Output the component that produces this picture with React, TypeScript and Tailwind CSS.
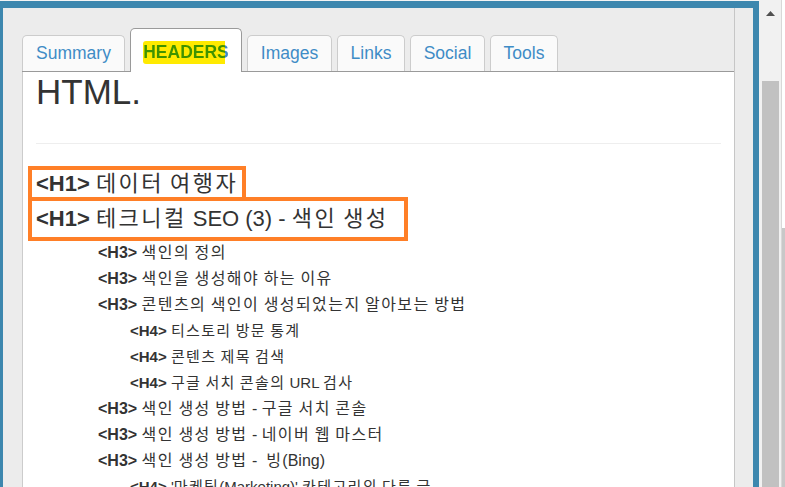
import React from 'react';

const FONT = "font-['Liberation_Sans','Noto_Sans_CJK_KR',sans-serif]";

type Row = { tag: 'H3' | 'H4'; text: string };

const rows: Row[] = [
  { tag: 'H3', text: '색인의 정의' },
  { tag: 'H3', text: '색인을 생성해야 하는 이유' },
  { tag: 'H3', text: '콘텐츠의 색인이 생성되었는지 알아보는 방법' },
  { tag: 'H4', text: '티스토리 방문 통계' },
  { tag: 'H4', text: '콘텐츠 제목 검색' },
  { tag: 'H4', text: '구글 서치 콘솔의 URL 검사' },
  { tag: 'H3', text: '색인 생성 방법 - 구글 서치 콘솔' },
  { tag: 'H3', text: '색인 생성 방법 - 네이버 웹 마스터' },
  { tag: 'H3', text: '색인 생성 방법 -  빙(Bing)' },
  { tag: 'H4', text: "'마케팅(Marketing)' 카테고리의 다른 글" },
];

const tabs = [
  { label: 'Summary', w: 'w-[103px]' },
  { label: 'HEADERS', w: 'w-[112px]', active: true },
  { label: 'Images', w: 'w-[85px]' },
  { label: 'Links', w: 'w-[68px]' },
  { label: 'Social', w: 'w-[75px]' },
  { label: 'Tools', w: 'w-[68px]' },
];

// Hangul runs are set a little wider, like the original's Windows font
const Ko: React.FC<{ text: string; tracking: string }> = ({ text, tracking }) => (
  <>
    {text.split(/([가-힣]+)/).map((part, i) =>
      /[가-힣]/.test(part) ? (
        <span key={i} className={tracking}>
          {part}
        </span>
      ) : (
        <React.Fragment key={i}>{part}</React.Fragment>
      )
    )}
  </>
);

const Tab: React.FC<{ label: string; w: string; active?: boolean }> = ({ label, w, active }) => {
  if (active) {
    return (
      <div className={`${w} h-[44px] -mb-px pt-[3px] flex items-center justify-center bg-white border border-b-0 border-[#9a9a9a] rounded-t-[5px]`}>
        <span className="bg-[linear-gradient(to_right,#ffea00_calc(100%-4px),transparent_calc(100%-4px))] rounded-[3px] leading-[22px]">
          <span className="text-[17.5px] font-bold bg-[linear-gradient(to_right,#3f9300_calc(100%-4px),#3d8ac4_calc(100%-4px))] bg-clip-text text-transparent">
            {label}
          </span>
        </span>
      </div>
    );
  }
  return (
    <div className={`${w} h-[36px] flex items-center justify-center bg-[#fafafa] border border-b-0 border-[#cccccc] rounded-t-[5px] text-[17.5px] text-[#3f8cc6]`}>
      {label}
    </div>
  );
};

export default function App() {
  return (
    <div className={`w-[785px] h-[487px] overflow-hidden flex bg-white ${FONT}`}>
      <div className="w-[759px] h-full pt-px bg-[#f4f4f4] flex flex-col">
        <div className="flex-1 flex bg-[#ececec] border-t-[7px] border-l-[3px] border-r-[6px] border-[#3d87ae] min-h-0">
          <div className="ml-[19px] w-[713px] flex flex-col border-r border-[#c6c6c6] min-h-0">
            {/* tab bar */}
            <div className="h-[64px] shrink-0 flex items-end gap-[5px] border-b border-[#9a9a9a]">
              {tabs.map((t) => (
                <Tab key={t.label} {...t} />
              ))}
            </div>

            {/* panel */}
            <div className="flex-1 bg-white border-l border-[#cccccc] pl-[13px] pr-[13px] overflow-hidden text-[#333]">
              <div className="text-[35px] leading-[40px]">HTML.</div>
              <div className="mt-[31px] h-px bg-[#eeeeee]" />

              <div className="mt-[22px] -ml-[8px] flex flex-col items-start">
                <div className="h-[35px] border-4 border-[#ff7f27] px-1 text-[22px] leading-[27px] whitespace-nowrap">
                  <span className="font-bold">&lt;H1&gt;</span> <Ko text="데이터 여행자" tracking="tracking-[0.11em]" />
                </div>
                <div className="-mt-1 h-[44px] border-4 border-[#ff7f27] pl-1 pr-[15px] text-[22px] leading-[36px] whitespace-nowrap">
                  <span className="font-bold">&lt;H1&gt;</span> <Ko text="테크니컬 SEO (3) - 색인 생성" tracking="tracking-[0.11em]" />
                </div>
              </div>

              <ul className="-mt-px">
                {rows.map((r, i) => (
                  <li
                    key={i}
                    className={
                      r.tag === 'H3'
                        ? 'ml-[62px] text-[16px] leading-[26px] whitespace-pre'
                        : 'ml-[94px] text-[15px] leading-[26px] whitespace-pre'
                    }
                  >
                    <span className="font-bold">&lt;{r.tag}&gt;</span> <Ko text={r.text} tracking="tracking-[0.09em]" />
                  </li>
                ))}
              </ul>
            </div>
          </div>
        </div>
      </div>

      {/* browser scrollbar */}
      <div className="w-[22px] h-full bg-[#f1f1f1] flex flex-col items-center">
        <div className="h-[81px] w-full flex justify-center pt-[11px]">
          <svg width="9" height="5" viewBox="0 0 9 5">
            <path d="M0 5 L4.5 0 L9 5 Z" fill="#505050" />
          </svg>
        </div>
        <div className="flex-1 w-[17px] bg-[#c1c1c1]" />
      </div>

      {/* underlying page edge */}
      <div className="w-[4px] h-full border-l border-[#d8d8d8] flex flex-col">
        <div className="h-[228px] bg-white" />
        <div className="flex-1 bg-[#c8c8c8]" />
      </div>
    </div>
  );
}
